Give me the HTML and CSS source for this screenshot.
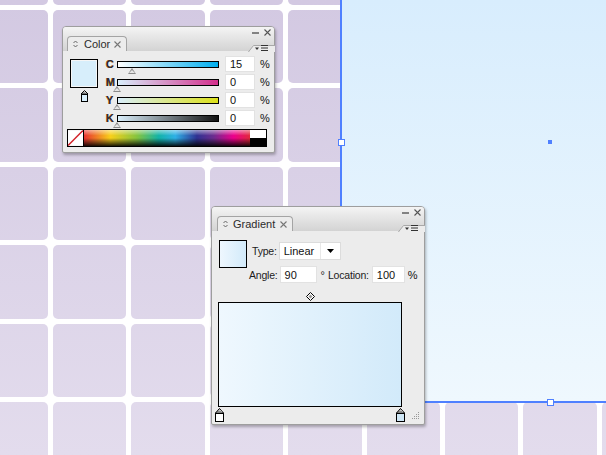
FILE: index.html
```html
<!DOCTYPE html>
<html lang="en">
<head>
<meta charset="utf-8">
<title>Color and Gradient panels</title>
<link rel="stylesheet" href="styles.css">
</head>
<body>
<div class="canvas">
  <div class="tiles">
    <i></i><i></i><i></i><i></i><i></i><i></i><i></i><i></i><i></i>
    <i></i><i></i><i></i><i></i><i></i><i></i><i></i><i></i><i></i>
    <i></i><i></i><i></i><i></i><i></i><i></i><i></i><i></i><i></i>
    <i></i><i></i><i></i><i></i><i></i><i></i><i></i><i></i><i></i>
    <i></i><i></i><i></i><i></i><i></i><i></i><i></i><i></i><i></i>
    <i></i><i></i><i></i><i></i><i></i><i></i><i></i><i></i><i></i>
    <i></i><i></i><i></i><i></i><i></i><i></i><i></i><i></i><i></i>
  </div>

  <div class="shape">
    <span class="handle h-left"></span>
    <span class="center-pt"></span>
    <span class="handle h-bottom"></span>
  </div>

  <section class="panel color-panel">
    <header class="head">
      <div class="tab">
        <svg class="updown" width="5" height="8" viewBox="0 0 5 8"><path d="M0.5 3 L2.5 1 L4.5 3 M0.5 5 L2.5 7 L4.5 5" fill="none" stroke="#666" stroke-width="1"/></svg>
        <span class="tab-title">Color</span>
        <svg class="tab-x" width="7" height="7" viewBox="0 0 7 7"><path d="M0.5 0.5 L6.5 6.5 M6.5 0.5 L0.5 6.5" stroke="#777" stroke-width="1.1"/></svg>
      </div>
      <div class="head-right">
        <div class="win-ctrls">
          <svg width="7" height="7" viewBox="0 0 7 7"><path d="M0 4 H7" stroke="#555" stroke-width="1.4"/></svg>
          <svg width="7" height="7" viewBox="0 0 7 7"><path d="M0.5 0.5 L6.5 6.5 M6.5 0.5 L0.5 6.5" stroke="#555" stroke-width="1.1"/></svg>
        </div>
        <svg class="notch" width="27" height="8" viewBox="0 0 27 8"><path d="M0 8.5 L5.5 1.5 H27.5 V8.5 Z" fill="#ececec" stroke="#a8a8a8" stroke-width="1"/><path d="M7 3.5 H11 L9 6 Z" fill="#333"/><path d="M13 1.5 H20 M13 4 H20 M13 6.5 H20" stroke="#333" stroke-width="1"/></svg>
      </div>
    </header>
    <div class="body color-body">
      <div class="color-top">
        <div class="swatch-col">
          <div class="swatch"></div>
          <svg class="fillstroke" width="9" height="12" viewBox="0 0 9 12"><path d="M4.5 0.5 L8 4 H1 Z" fill="#fff" stroke="#000" stroke-width="1"/><path d="M3.5 2 h2 M2.5 3 h4" stroke="#000" stroke-width="0.8" stroke-dasharray="1 1"/><rect x="1.5" y="4.5" width="6" height="7" fill="#d7eefb" stroke="#000" stroke-width="1"/></svg>
        </div>
        <div class="sliders">
          <div class="srow">
            <span class="slabel">C</span>
            <div class="track"><div class="bar bar-c"></div><span class="thumb" style="left:11px"></span></div>
            <span class="num">15</span><span class="pct">%</span>
          </div>
          <div class="srow">
            <span class="slabel">M</span>
            <div class="track"><div class="bar bar-m"></div><span class="thumb" style="left:-4px"></span></div>
            <span class="num">0</span><span class="pct">%</span>
          </div>
          <div class="srow">
            <span class="slabel">Y</span>
            <div class="track"><div class="bar bar-y"></div><span class="thumb" style="left:-4px"></span></div>
            <span class="num">0</span><span class="pct">%</span>
          </div>
          <div class="srow">
            <span class="slabel">K</span>
            <div class="track"><div class="bar bar-k"></div><span class="thumb" style="left:-4px"></span></div>
            <span class="num">0</span><span class="pct">%</span>
          </div>
        </div>
      </div>
      <div class="spectrum">
        <svg class="none-sw" width="16" height="16" viewBox="0 0 16 16"><rect width="16" height="16" fill="#fff"/><path d="M0 16 L16 0" stroke="#d2232a" stroke-width="1.6"/></svg>
        <div class="hues"></div>
        <div class="bw"><span class="w"></span><span class="k"></span></div>
      </div>
    </div>
  </section>

  <section class="panel grad-panel">
    <header class="head">
      <div class="tab">
        <svg class="updown" width="5" height="8" viewBox="0 0 5 8"><path d="M0.5 3 L2.5 1 L4.5 3 M0.5 5 L2.5 7 L4.5 5" fill="none" stroke="#666" stroke-width="1"/></svg>
        <span class="tab-title">Gradient</span>
        <svg class="tab-x" width="7" height="7" viewBox="0 0 7 7"><path d="M0.5 0.5 L6.5 6.5 M6.5 0.5 L0.5 6.5" stroke="#777" stroke-width="1.1"/></svg>
      </div>
      <div class="head-right">
        <div class="win-ctrls">
          <svg width="7" height="7" viewBox="0 0 7 7"><path d="M0 4 H7" stroke="#555" stroke-width="1.4"/></svg>
          <svg width="7" height="7" viewBox="0 0 7 7"><path d="M0.5 0.5 L6.5 6.5 M6.5 0.5 L0.5 6.5" stroke="#555" stroke-width="1.1"/></svg>
        </div>
        <svg class="notch" width="27" height="8" viewBox="0 0 27 8"><path d="M0 8.5 L5.5 1.5 H27.5 V8.5 Z" fill="#ececec" stroke="#a8a8a8" stroke-width="1"/><path d="M7 3.5 H11 L9 6 Z" fill="#333"/><path d="M13 1.5 H20 M13 4 H20 M13 6.5 H20" stroke="#333" stroke-width="1"/></svg>
      </div>
    </header>
    <div class="body grad-body">
      <div class="grad-top">
        <div class="gswatch"></div>
        <div class="gfields">
          <div class="frow">
            <span class="flabel">Type:</span>
            <div class="select"><span class="sel-val">Linear</span><span class="sel-btn"><svg width="7" height="4" viewBox="0 0 7 4"><path d="M0 0 H7 L3.5 4 Z" fill="#000"/></svg></span></div>
          </div>
          <div class="frow frow2">
            <span class="flabel">Angle:</span>
            <span class="num angle">90</span>
            <span class="deg">°</span>
            <span class="flabel loc">Location:</span>
            <span class="num locnum">100</span>
            <span class="pct">%</span>
          </div>
        </div>
      </div>
      <div class="ramp-wrap">
        <svg class="midpt" width="9" height="9" viewBox="0 0 9 9"><path d="M4.5 0.5 L8.5 4.5 L4.5 8.5 L0.5 4.5 Z" fill="#fff" stroke="#000" stroke-width="1"/><path d="M4.5 2.5 L6.5 4.5 L4.5 6.5 L2.5 4.5 Z" fill="#999"/></svg>
        <div class="ramp"></div>
        <div class="stops">
          <svg width="9" height="14" viewBox="0 0 9 14"><path d="M4.5 0.5 L8.5 5 H0.5 Z" fill="#fff" stroke="#000" stroke-width="1"/><path d="M3.5 2 h2 M2.5 3.5 h4" stroke="#000" stroke-width="0.9" stroke-dasharray="1 1"/><rect x="0.5" y="5.5" width="8" height="8" fill="#fff" stroke="#000" stroke-width="1"/></svg>
          <svg width="9" height="14" viewBox="0 0 9 14"><path d="M4.5 0.5 L8.5 5 H0.5 Z" fill="#fff" stroke="#000" stroke-width="1"/><path d="M3.5 2 h2 M2.5 3.5 h4" stroke="#000" stroke-width="0.9" stroke-dasharray="1 1"/><rect x="0.5" y="5.5" width="8" height="8" fill="#cfe7f6" stroke="#000" stroke-width="1"/></svg>
        </div>
      </div>
      <svg class="grip" width="8" height="8" viewBox="0 0 8 8"><g fill="#999"><rect x="6" y="0" width="1" height="1"/><rect x="4" y="2" width="1" height="1"/><rect x="6" y="2" width="1" height="1"/><rect x="2" y="4" width="1" height="1"/><rect x="4" y="4" width="1" height="1"/><rect x="6" y="4" width="1" height="1"/><rect x="0" y="6" width="1" height="1"/><rect x="2" y="6" width="1" height="1"/><rect x="4" y="6" width="1" height="1"/><rect x="6" y="6" width="1" height="1"/></g></svg>
    </div>
  </section>
</div>
</body>
</html>
```
FILE: styles.css
```css
* { box-sizing: border-box; }
html, body { margin: 0; height: 100%; }
body {
  background: #fff;
  font: 11px "Liberation Sans", Arial, sans-serif;
  color: #1c1c1c;
  overflow: hidden;
}
.canvas { position: relative; width: 606px; height: 455px; overflow: hidden; }

/* artboard tiles */
.tiles {
  position: absolute;
  left: -25.4px;
  top: -68.4px;
  display: grid;
  grid-template-columns: repeat(9, 73.4px);
  grid-auto-rows: 73.4px;
  gap: 5px;
}
.tiles i {
  display: block;
  border-radius: 5px;
  background: linear-gradient(#d3c9e2, #e3dced) fixed;
}

/* selected rectangle */
.shape {
  position: absolute;
  left: 340px;
  top: -2px;
  width: 270px;
  height: 405px;
  border: 2px solid #4f80ff;
  background: linear-gradient(#d8edfd, #eff8fe);
}
.handle {
  position: absolute;
  width: 7px;
  height: 7px;
  background: #fff;
  border: 1.5px solid #4f80ff;
}
.h-left { left: -4.5px; top: 139px; }
.h-bottom { left: 205px; top: 399px; }
.center-pt { position: absolute; left: 206px; top: 140px; width: 4px; height: 4px; background: #4f80ff; }

/* panels */
.panel {
  position: absolute;
  display: flex;
  flex-direction: column;
  background: #ececec;
  border: 1px solid #9e9e9e;
  border-radius: 4px 4px 2px 2px;
  box-shadow: 1px 2px 3px rgba(0, 0, 0, 0.28);
}
.color-panel { left: 62px; top: 26px; width: 213px; height: 127px; }
.grad-panel { left: 211px; top: 206px; width: 214px; height: 219px; }

.head {
  flex: none;
  height: 24px;
  display: flex;
  justify-content: space-between;
  padding-left: 4px;
  border-radius: 3px 3px 0 0;
  background: linear-gradient(#f4f4f4, #d3d3d3);
}
.grad-panel .head { padding-left: 5px; }
.tab {
  align-self: flex-end;
  height: 15px;
  display: flex;
  align-items: center;
  padding: 0 5px 0 5px;
  background: #ececec;
  border: 1px solid #a4a4a4;
  border-bottom: 0;
  border-radius: 4px 4px 0 0;
}
.tab-title { margin: 0 4px 0 6px; color: #2b2b2b; font-size: 11px; line-height: 13px; }
.grad-panel .tab-title { margin-left: 5px; margin-right: 5px; }
.updown, .tab-x { display: block; flex: none; }

.head-right {
  display: flex;
  flex-direction: column;
  align-items: flex-end;
  justify-content: space-between;
}
.win-ctrls { display: flex; gap: 5px; padding: 2px 3px 0 0; }
.win-ctrls svg { display: block; }
.notch { display: block; margin-right: -1px; margin-bottom: -1px; }

/* color panel body */
.color-body { flex: 1; display: flex; flex-direction: column; padding: 5px 0 0 4px; }
.color-top { display: flex; }
.swatch-col { width: 28px; margin-left: 3px; display: flex; flex-direction: column; align-items: center; padding-top: 3px; }
.swatch { width: 28px; height: 29px; flex: none; background: #d7eefb; border: 1px solid #000; box-shadow: 0 0 0 1px #f6f6f6 inset; }
.fillstroke { display: block; margin-top: 2px; }
.sliders { display: flex; flex-direction: column; gap: 2px; margin-left: 8px; }
.srow { display: flex; align-items: center; height: 16px; }
.slabel { width: 11px; font-weight: bold; color: #2e2a36; font-size: 11px; text-shadow: -0.4px 0 0 #c27000; }
.track { position: relative; width: 102px; height: 16px; }
.bar { position: absolute; left: 0; right: 0; top: 5px; height: 7px; border: 1px solid #000; }
.bar-c { background: linear-gradient(90deg, #ffffff, #00aeef); }
.bar-m { background: linear-gradient(90deg, #d9eefb, #d32f8c); }
.bar-y { background: linear-gradient(90deg, #d9eefb, #dce11a); }
.bar-k { background: linear-gradient(90deg, #d9eefb, #111); }
.thumb {
  position: absolute;
  top: 12px;
  width: 0;
  height: 0;
  border-left: 4.5px solid transparent;
  border-right: 4.5px solid transparent;
  border-bottom: 6px solid #8a8a8a;
}
.thumb::after {
  content: "";
  position: absolute;
  left: -3px;
  top: 1.6px;
  border-left: 3px solid transparent;
  border-right: 3px solid transparent;
  border-bottom: 3.5px solid #e6e6e6;
}
.num {
  display: flex;
  align-items: center;
  height: 16px;
  background: #fff;
  border: 1px solid #e2e2e2;
  padding-left: 4px;
  color: #111;
}
.srow .num { width: 30px; margin-left: 6px; }
.pct { margin-left: 5px; color: #111; }

.spectrum { display: flex; height: 18px; width: 200px; margin-top: 3px; border: 1px solid #000; }
.none-sw { display: block; flex: none; border-right: 1px solid #000; }
.hues {
  flex: 1;
  background:
    linear-gradient(180deg, rgba(255,255,255,0.5) 0%, rgba(255,255,255,0) 35%, rgba(0,0,0,0) 50%, rgba(0,0,0,0.88) 100%),
    linear-gradient(90deg, #e8322f 0%, #f8d01a 16%, #84c43f 32%, #12b3a8 45%, #2eb0e6 55%, #2e3192 68%, #6c2c8f 78%, #ec008c 90%, #e2283a 100%);
}
.bw { width: 16px; display: flex; flex-direction: column; }
.bw .w { flex: 1; background: #fff; }
.bw .k { flex: 1; background: #000; }

/* gradient panel body */
.grad-body { position: relative; flex: 1; display: flex; flex-direction: column; padding: 9px 0 0 7px; }
.grad-top { display: flex; }
.gswatch { width: 28px; height: 28px; border: 1px solid #000; background: linear-gradient(90deg, #eef7fe, #d2eafa); }
.gfields { display: flex; flex-direction: column; gap: 6px; padding-top: 2px; }
.frow { display: flex; align-items: center; height: 18px; }
.flabel { color: #1c1c1c; font-size: 10.5px; letter-spacing: -0.2px; }
.grad-top .frow:first-child .flabel { margin-left: 5px; margin-right: 2px; }
.select { display: flex; width: 62px; height: 18px; background: #fff; border: 1px solid #dcdcdc; }
.sel-val { flex: 1; padding-left: 4px; display: flex; align-items: center; border-right: 1px solid #e8e8e8; color: #111; }
.sel-btn { width: 19px; display: flex; align-items: center; justify-content: center; }
.sel-btn svg { display: block; }
.frow2 { margin-left: 2px; height: 17px; }
.frow2 .num { height: 17px; }
.angle { width: 37px; margin-left: 2px; }
.deg { margin: 0 3px 0 4px; }
.locnum { width: 33px; margin-left: 3px; }
.frow2 .pct { margin-left: 3px; }

.ramp-wrap { display: flex; flex-direction: column; align-items: center; width: 186px; margin-top: 9px; margin-left: -2px; }
.midpt { display: block; margin-bottom: 1px; }
.ramp { width: 184px; height: 105px; border: 1.5px solid #000; background: linear-gradient(90deg, #eff8fe, #d2eafa); }
.stops { width: 190px; display: flex; justify-content: space-between; margin-top: 1px; }
.stops svg { display: block; }
.grip { position: absolute; right: 4px; bottom: 4px; display: block; }
```
